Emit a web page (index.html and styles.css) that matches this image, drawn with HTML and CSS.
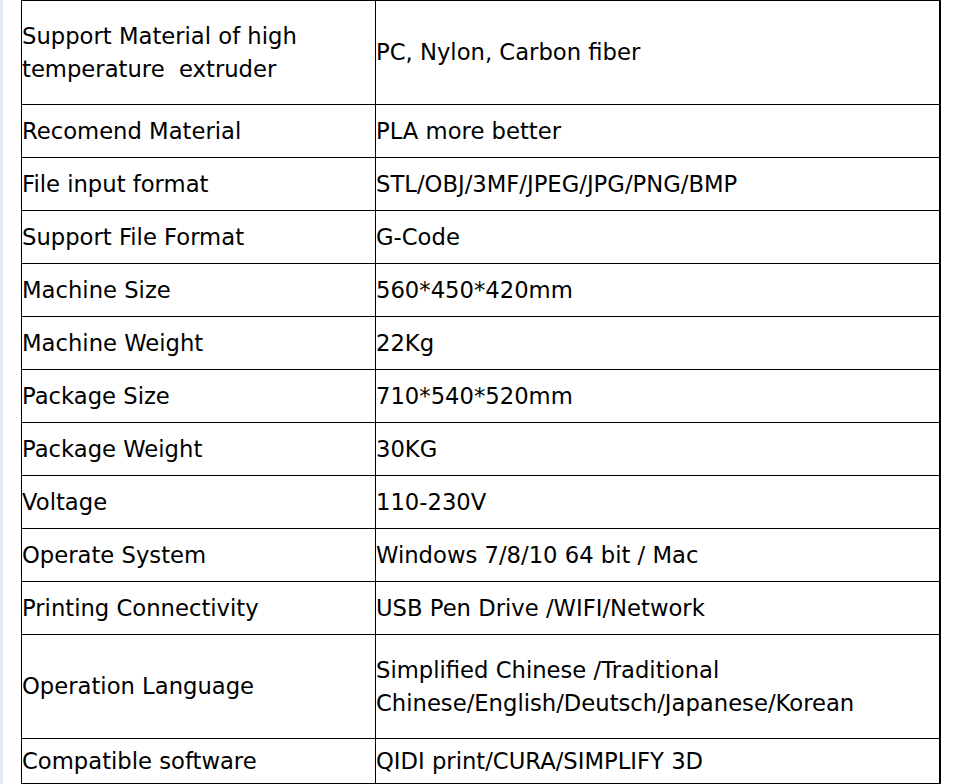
FILE: index.html
```html
<!DOCTYPE html>
<html>
<head>
<meta charset="utf-8">
<link rel="stylesheet" href="styles.css">
</head>
<body>
<div class="page">
<table class="spec">
<tr class="tall"><td class="k">Support Material of high temperature&nbsp; extruder</td><td class="v">PC, Nylon, Carbon fiber</td></tr>
<tr><td class="k">Recomend Material</td><td class="v">PLA more better</td></tr>
<tr><td class="k">File input format</td><td class="v">STL/OBJ/3MF/JPEG/JPG/PNG/BMP</td></tr>
<tr><td class="k">Support File Format</td><td class="v">G-Code</td></tr>
<tr><td class="k">Machine Size</td><td class="v">560*450*420mm</td></tr>
<tr><td class="k">Machine Weight</td><td class="v">22Kg</td></tr>
<tr><td class="k">Package Size</td><td class="v">710*540*520mm</td></tr>
<tr><td class="k">Package Weight</td><td class="v">30KG</td></tr>
<tr><td class="k">Voltage</td><td class="v">110-230V</td></tr>
<tr><td class="k">Operate System</td><td class="v">Windows 7/8/10 64 bit / Mac</td></tr>
<tr><td class="k">Printing Connectivity</td><td class="v">USB Pen Drive /WIFI/Network</td></tr>
<tr class="tall"><td class="k">Operation Language</td><td class="v">Simplified Chinese /Traditional Chinese/English/Deutsch/Japanese/Korean</td></tr>
<tr class="last"><td class="k">Compatible software</td><td class="v">QIDI print/CURA/SIMPLIFY 3D</td></tr>
</table>
</div>
</body>
</html>
```
FILE: styles.css
```css
html, body {
  margin: 0;
  padding: 0;
  background: #ffffff;
}
.page {
  border-left: 3px solid #e4eaf6;
  padding-left: 18px;
  height: 784px;
  box-sizing: border-box;
}
.spec {
  border-collapse: collapse;
  width: 920px;
  table-layout: fixed;
  font-family: "DejaVu Sans", Verdana, sans-serif;
  font-size: 22.7px;
  line-height: 33px;
  color: #000;
}
.spec td {
  border: 1px solid #000;
  padding: 0;
  vertical-align: middle;
  height: 53px;
  box-sizing: border-box;
}
.spec td.k { width: 354px; }
.spec td.v { border-right-width: 2px; }
.spec tr.tall td { height: 104px; }
.spec tr.last td { height: 45px; }
```
